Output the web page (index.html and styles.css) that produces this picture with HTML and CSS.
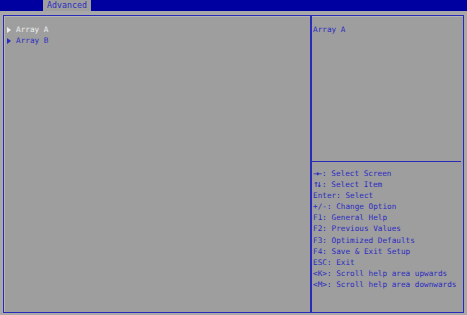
FILE: index.html
```html
<!DOCTYPE html>
<html>
<head>
<meta charset="UTF-8">
<title>Advanced</title>
<link rel="stylesheet" href="styles.css">
</head>
<body>
	<div class="top-bar">
		<span class="tab">Advanced</span>
	</div>

	<div class="setup-box">
		<div class="menu">
			<div class="item selected"><span class="arrow"></span>Array A</div>
			<div class="item"><span class="arrow"></span>Array B</div>
		</div>

		<div class="side">
			<div class="help">Array A</div>
			<div class="keys">
				<div><b>→←</b>: Select Screen</div>
				<div><b>↑↓</b>: Select Item</div>
				<div>Enter: Select</div>
				<div>+/-: Change Option</div>
				<div>F1: General Help</div>
				<div>F2: Previous Values</div>
				<div>F3: Optimized Defaults</div>
				<div>F4: Save &amp; Exit Setup</div>
				<div>ESC: Exit</div>
				<div>&lt;K&gt;: Scroll help area upwards</div>
				<div>&lt;M&gt;: Scroll help area downwards</div>
			</div>
		</div>
	</div>
</body>
</html>
```

FILE: styles.css
```css
body {
	margin: 0;
	width: 467px;
	height: 315px;
	background: #a8a8a8;
	font-family: "DejaVu Sans Mono", "Liberation Mono", monospace;
	font-size: 7.7px;
	color: #2c2cc0;
	overflow: hidden;
}

.top-bar {
	height: 11px;
	background: #0000a0;
	padding-left: 43px;
}

.tab {
	display: inline-block;
	height: 11px;
	line-height: 11px;
	padding: 0 4px;
	background: #9e9e9e;
	font-size: 8.3px;
}

.setup-box {
	display: flex;
	margin: 4px 3px 0 3px;
	height: 296px;
	border: 1px solid #2a2ab8;
	box-shadow: inset 1px 1px 0 #b4b4b4;
	background: #9e9e9e;
}

.menu {
	box-sizing: border-box;
	width: 308px;
	padding: 8px 0 0 3px;
	border-right: 2px solid #2a2ab8;
}

.item {
	display: flex;
	align-items: center;
	height: 11px;
}

.arrow {
	width: 0;
	height: 0;
	margin: 0 5px 0 0;
	border-top: 3px solid transparent;
	border-bottom: 3px solid transparent;
	border-left: 4px solid #2c2cc0;
}

.selected {
	color: #eeeeee;
}

.selected .arrow {
	border-left-color: #eeeeee;
}

.side {
	flex: 1;
	display: flex;
	flex-direction: column;
}

.help {
	height: 137px;
	padding: 8px 0 0 1px;
	line-height: 11px;
	border-bottom: 1px solid #2a2ab8;
	margin-right: 2px;
}

.keys {
	padding: 6px 0 0 1px;
	line-height: 11.1px;
}

.keys div {
	height: 11.1px;
}

.keys b {
	display: inline-block;
	width: 9px;
	line-height: 1;
	font-family: "DejaVu Sans", sans-serif;
	font-size: 7px;
	font-weight: bold;
	letter-spacing: -2.5px;
}
```
